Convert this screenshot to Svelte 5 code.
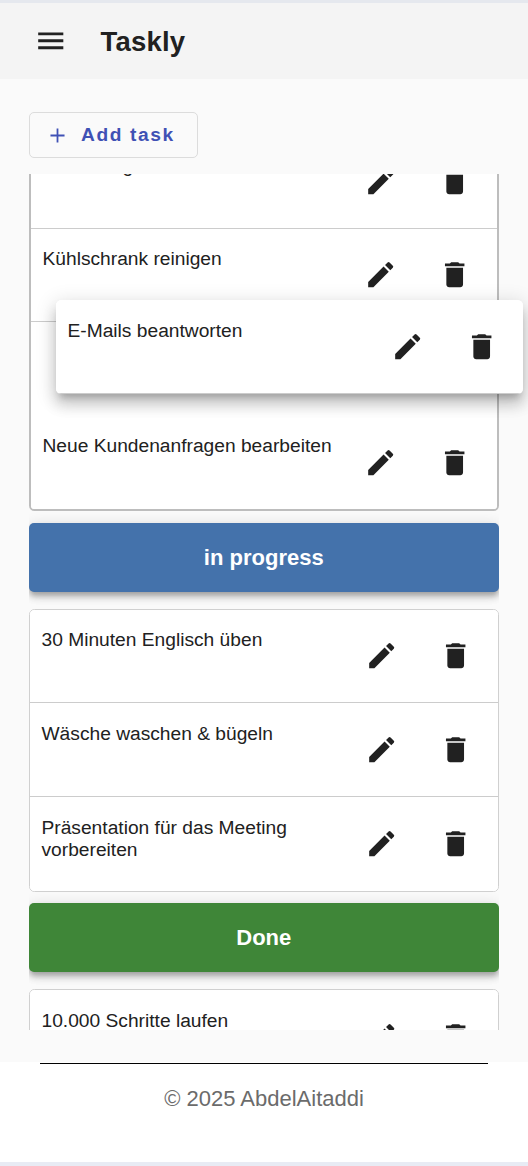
<script>
  const open = ['Pflanzen gießen', 'Kühlschrank reinigen', null, 'Neue Kundenanfragen bearbeiten'];
  const progress = [
    '30 Minuten Englisch üben',
    'Wäsche waschen & bügeln',
    'Präsentation für das Meeting vorbereiten'
  ];
  const done = ['10.000 Schritte laufen'];
</script>

{#snippet item(text)}
  <div class="item">
    <span class="label">{text}</span>
    <div class="actions">
      <button aria-label="Edit">
        <svg viewBox="0 0 24 24"><path d="M3 17.25V21h3.75L17.81 9.94l-3.75-3.75L3 17.25zM20.71 7.04a.996.996 0 0 0 0-1.41l-2.34-2.34a.996.996 0 0 0-1.41 0l-1.83 1.83 3.75 3.75 1.83-1.83z" /></svg>
      </button>
      <button aria-label="Delete">
        <svg viewBox="0 0 24 24"><path d="M6 19c0 1.100.9 2 2 2h8c1.100 0 2-.9 2-2V7H6v12zM19 4h-3.500l-1-1h-5l-1 1H5v2h14V4z" /></svg>
      </button>
    </div>
  </div>
{/snippet}

<div class="page">
  <header>
    <svg class="menu" viewBox="0 0 24 24"><path d="M3 18h18v-2H3v2zm0-5h18v-2H3v2zm0-7v2h18V6H3z" /></svg>
    <h1>Taskly</h1>
  </header>

  <main>
    <button class="add">
      <svg viewBox="0 0 16 16"><path d="M8 .5v15M.5 8h15" /></svg>
      <span>Add task</span>
    </button>

    <div class="board">
      <section class="list receiving">
        {#each open as task}
          {#if task}{@render item(task)}{:else}<div class="placeholder"></div>{/if}
        {/each}
      </section>
      <h2 class="progress">in progress</h2>
      <section class="list">
        {#each progress as task}{@render item(task)}{/each}
      </section>
      <h2 class="done">Done</h2>
      <section class="list">
        {#each done as task}{@render item(task)}{/each}
      </section>
    </div>
  </main>

  <footer><p>© 2025 AbdelAitaddi</p></footer>

  <div class="preview">{@render item('E-Mails beantworten')}</div>
</div>

<style>
  :global(body) { margin: 0; }
  .page {
    position: relative;
    box-sizing: border-box;
    width: 528px;
    height: 1166px;
    display: flex;
    flex-direction: column;
    overflow: hidden;
    border-top: 3px solid #e5e8ee;
    border-bottom: 4px solid #e8ebf4;
    background: #fff;
    color: #212121;
    font-family: "Liberation Sans", Arial, sans-serif;
  }
  header {
    flex: none;
    height: 76px;
    display: flex;
    align-items: center;
    gap: 33px;
    padding-left: 34px;
    background: #f4f4f4;
  }
  .menu { width: 33.500px; height: 33.500px; fill: #212121; }
  h1 { margin: 2px 0 0; font-size: 27.500px; line-height: 36px; letter-spacing: 0.200px; }
  main {
    flex: none;
    box-sizing: border-box;
    height: 983px;
    padding: 33px 29px 32px;
    background: #fafafa;
    display: flex;
    flex-direction: column;
    align-items: flex-start;
    gap: 16px;
  }
  button { font: inherit; color: inherit; border: 0; padding: 0; background: none; }
  .add {
    box-sizing: border-box;
    flex: none;
    width: 169px;
    height: 46px;
    border: 1.500px solid #dcdcdc;
    border-radius: 5px;
    display: flex;
    align-items: center;
    gap: 16px;
    padding-left: 20px;
    color: #3f51b5;
    font-size: 19.200px;
    font-weight: 700;
    letter-spacing: 1.600px;
  }
  .add svg { width: 15px; height: 15px; fill: none; stroke: #3f51b5; stroke-width: 1.900; margin-top: 1px; }
  .board { width: 469.500px; flex: 1; min-height: 0; overflow: hidden; }
  .list {
    box-sizing: border-box;
    border: 1.500px solid #d0d0d0;
    border-radius: 5.500px;
    background: #fff;
    overflow: hidden;
  }
  .receiving { border: 2px solid #bdbdbd; margin-top: -41px; }
  .item {
    box-sizing: border-box;
    height: 93.600px;
    border-bottom: 1px solid #ccc;
    display: flex;
    justify-content: space-between;
    padding: 0 24.800px 0 11.500px;
    background: #fff;
  }
  .list .item:last-child { border-bottom: 0; }
  .placeholder { height: 93.600px; }
  .label { flex: 1; padding-top: 19.600px; font-size: 19.200px; line-height: 22.200px; }
  .actions { display: flex; align-items: center; gap: 40.800px; padding-left: 25px; }
  .actions button { display: flex; }
  .actions svg { width: 33.400px; height: 33.400px; fill: #212121; }
  h2 {
    margin: 11.400px 0 17px;
    height: 69px;
    border-radius: 5px;
    color: #fff;
    font-size: 22px;
    line-height: 69px;
    text-align: center;
    box-shadow: 0 4px 5.500px -1px rgba(0, 0, 0, .2), 0 5.500px 7px rgba(0, 0, 0, .14), 0 1px 14px rgba(0, 0, 0, .12);
  }
  .progress { background: #4472ab; }
  .done { background: #3f8638; }
  footer { height: 97px; display: flex; justify-content: center; padding-top: 1px; }
  footer p {
    width: 448px;
    margin: 0;
    border-top: 1.500px solid #000;
    padding-top: 22px;
    height: 72px;
    text-align: center;
    color: #6b6b6b;
    font-size: 22px;
    line-height: 26px;
  }
  .preview {
    position: absolute;
    left: 56px;
    top: 297px;
    width: 467px;
    border-radius: 5.500px;
    overflow: hidden;
    box-shadow: 0 7px 7px -4px rgba(0, 0, 0, .2), 0 11px 14px 1px rgba(0, 0, 0, .14), 0 4px 19px 3px rgba(0, 0, 0, .12);
  }
</style>
